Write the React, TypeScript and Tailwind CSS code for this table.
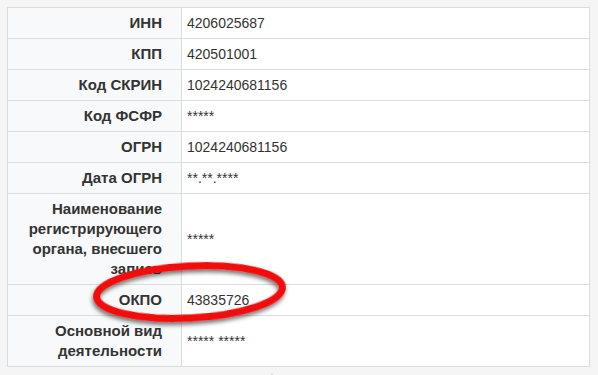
import React from 'react';

type Row = { label: string; value: string };

const rows: Row[] = [
  { label: 'ИНН', value: '4206025687' },
  { label: 'КПП', value: '420501001' },
  { label: 'Код СКРИН', value: '1024240681156' },
  { label: 'Код ФСФР', value: '*****' },
  { label: 'ОГРН', value: '1024240681156' },
  { label: 'Дата ОГРН', value: '**.**.****' },
  { label: 'Наименование регистрирующего органа, внесшего запись', value: '*****' },
  { label: 'ОКПО', value: '43835726' },
  { label: 'Основной вид деятельности', value: '***** *****' },
];

const Highlight: React.FC = () => (
  <svg className="pointer-events-none absolute left-0 top-0" width="598" height="375" viewBox="0 0 598 375">
    <defs>
      <filter id="shadow" x="-20%" y="-40%" width="140%" height="180%">
        <feDropShadow dx="-1" dy="3" stdDeviation="2" floodColor="#000" floodOpacity="0.55" />
      </filter>
    </defs>
    <ellipse
      cx="189.5"
      cy="292"
      rx="93"
      ry="26"
      transform="rotate(-3 189.5 292)"
      fill="none"
      stroke="#f20a0a"
      strokeWidth="7"
      filter="url(#shadow)"
    />
  </svg>
);

export default function App() {
  return (
    <div className="relative h-[375px] w-[598px] overflow-hidden bg-[#f5f5f5] pl-[7px] pt-[7px] font-['Liberation_Sans',Arial,sans-serif] text-[14px] text-[#333]">
      <div className="w-[583px] border border-[#dcdcdc] bg-white">
        {rows.map((row, i) => (
          <div key={row.label} className={`flex ${i > 0 ? 'border-t border-[#dcdcdc]' : ''}`}>
            <div className="w-[174px] shrink-0 border-r border-[#dcdcdc] bg-[#f8f9fa] py-[5px] pl-[10px] pr-[19px] text-right text-[15px] font-bold leading-[20px]">
              {row.label}
            </div>
            <div className="flex flex-1 items-center pl-[5px] leading-[20px]">{row.value}</div>
          </div>
        ))}
      </div>
      <p className="mt-[4px] flex gap-[22px] whitespace-nowrap pl-[15px] leading-[20px] text-[#777]">
        <span>Данные получены из открытых</span>
        <span>Шаблон отчёта</span>
      </p>
      <Highlight />
    </div>
  );
}
